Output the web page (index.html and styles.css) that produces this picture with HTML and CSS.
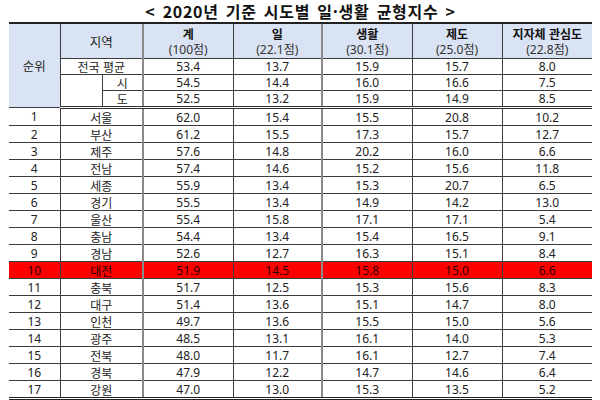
FILE: index.html
```html
<!DOCTYPE html>
<html lang="ko">
<head>
<meta charset="utf-8">
<title>2020년 기준 시도별 일·생활 균형지수</title>
<link rel="stylesheet" href="styles.css">
</head>
<body>
<div class="page">
  <h1 class="title">&lt; 2020년 기준 시도별 일·생활 균형지수 &gt;</h1>
  <table class="tbl">
    <colgroup>
      <col class="c-rank"><col class="c-ra"><col class="c-rb">
      <col class="c-v"><col class="c-v2"><col class="c-v"><col class="c-v"><col class="c-v">
    </colgroup>
    <thead>
      <tr class="hdr">
        <th rowspan="4" class="head rank-h">순위</th>
        <th colspan="2" class="head region-h">지역</th>
        <th class="head gl"><b>계</b><span>(100점)</span></th>
        <th class="head"><b>일</b><span>(22.1점)</span></th>
        <th class="head gl"><b>생활</b><span>(30.1점)</span></th>
        <th class="head"><b>제도</b><span>(25.0점)</span></th>
        <th class="head"><b>지자체 관심도</b><span>(22.8점)</span></th>
      </tr>
      <tr class="avg">
        <td colspan="2" class="region">전국 평균</td>
        <td class="gl">53.4</td><td>13.7</td><td class="gl">15.9</td><td>15.7</td><td>8.0</td>
      </tr>
      <tr class="avg">
        <td rowspan="2" class="blank"></td>
        <td class="sub">시</td>
        <td class="gl">54.5</td><td>14.4</td><td class="gl">16.0</td><td>16.6</td><td>7.5</td>
      </tr>
      <tr class="avg last">
        <td class="sub">도</td>
        <td class="gl">52.5</td><td>13.2</td><td class="gl">15.9</td><td>14.9</td><td>8.5</td>
      </tr>
    </thead>
    <tbody>
      <tr><td>1</td><td colspan="2">서울</td><td class="gl">62.0</td><td>15.4</td><td class="gl">15.5</td><td>20.8</td><td>10.2</td></tr>
      <tr><td>2</td><td colspan="2">부산</td><td class="gl">61.2</td><td>15.5</td><td class="gl">17.3</td><td>15.7</td><td>12.7</td></tr>
      <tr><td>3</td><td colspan="2">제주</td><td class="gl">57.6</td><td>14.8</td><td class="gl">20.2</td><td>16.0</td><td>6.6</td></tr>
      <tr><td>4</td><td colspan="2">전남</td><td class="gl">57.4</td><td>14.6</td><td class="gl">15.2</td><td>15.6</td><td>11.8</td></tr>
      <tr><td>5</td><td colspan="2">세종</td><td class="gl">55.9</td><td>13.4</td><td class="gl">15.3</td><td>20.7</td><td>6.5</td></tr>
      <tr><td>6</td><td colspan="2">경기</td><td class="gl">55.5</td><td>13.4</td><td class="gl">14.9</td><td>14.2</td><td>13.0</td></tr>
      <tr><td>7</td><td colspan="2">울산</td><td class="gl">55.4</td><td>15.8</td><td class="gl">17.1</td><td>17.1</td><td>5.4</td></tr>
      <tr><td>8</td><td colspan="2">충남</td><td class="gl">54.4</td><td>13.4</td><td class="gl">15.4</td><td>16.5</td><td>9.1</td></tr>
      <tr><td>9</td><td colspan="2">경남</td><td class="gl">52.6</td><td>12.7</td><td class="gl">16.3</td><td>15.1</td><td>8.4</td></tr>
      <tr class="hl"><td>10</td><td colspan="2">대전</td><td class="gl">51.9</td><td>14.5</td><td class="gl">15.8</td><td>15.0</td><td>6.6</td></tr>
      <tr><td>11</td><td colspan="2">충북</td><td class="gl">51.7</td><td>12.5</td><td class="gl">15.3</td><td>15.6</td><td>8.3</td></tr>
      <tr><td>12</td><td colspan="2">대구</td><td class="gl">51.4</td><td>13.6</td><td class="gl">15.1</td><td>14.7</td><td>8.0</td></tr>
      <tr><td>13</td><td colspan="2">인천</td><td class="gl">49.7</td><td>13.6</td><td class="gl">15.5</td><td>15.0</td><td>5.6</td></tr>
      <tr><td>14</td><td colspan="2">광주</td><td class="gl">48.5</td><td>13.1</td><td class="gl">16.1</td><td>14.0</td><td>5.3</td></tr>
      <tr><td>15</td><td colspan="2">전북</td><td class="gl">48.0</td><td>11.7</td><td class="gl">16.1</td><td>12.7</td><td>7.4</td></tr>
      <tr><td>16</td><td colspan="2">경북</td><td class="gl">47.9</td><td>12.2</td><td class="gl">14.7</td><td>14.6</td><td>6.4</td></tr>
      <tr class="end"><td>17</td><td colspan="2">강원</td><td class="gl">47.0</td><td>13.0</td><td class="gl">15.3</td><td>13.5</td><td>5.2</td></tr>
    </tbody>
  </table>
</div>
</body>
</html>
```
FILE: styles.css
```css
html, body {
  margin: 0;
  padding: 0;
  background: #ffffff;
}
body {
  font-family: "Noto Sans", "Noto Sans CJK KR", sans-serif;
  color: #222222;
  width: 600px;
  height: 400px;
  overflow: hidden;
}
.page {
  padding: 0 8px 0 9px;
}
.title {
  margin: 0;
  height: 22px;
  font-family: "Noto Sans CJK KR", sans-serif;
  font-size: 16px;
  font-weight: 700;
  line-height: 22px;
  text-align: center;
  color: #111111;
  letter-spacing: 0.7px;
  word-spacing: 2px;
}
.tbl {
  width: 583px;
  border-collapse: collapse;
  table-layout: fixed;
  font-size: 12px;
}
.c-rank { width: 51px; }
.c-ra { width: 42px; }
.c-rb { width: 41px; }
.c-v { width: 90px; }
.c-v2 { width: 89px; }

.tbl th, .tbl td {
  padding: 0;
  text-align: center;
  vertical-align: middle;
  border: 1px solid #3c3c3c;
  line-height: 15px;
  white-space: nowrap;
  overflow: hidden;
}
.tbl tr > :first-child { border-left: none; }
.tbl tr > :last-child { border-right: none; }
.tbl .hdr th { border-top: 2px solid #222222; }
.tbl .rank-h { border-left: none; }

.head {
  background: #dae3f3;
  font-weight: 400;
  height: 34px;
  font-size: 12px;
}
.head b, .head span {
  display: block;
  line-height: 17px;
}
.head b {
  font-family: "Noto Sans CJK KR", sans-serif;
  font-weight: 700;
  color: #111111;
  font-size: 12px;
}
.head span {
  color: #333333;
  margin-top: -1px;
}
.rank-h, .region-h {
  font-family: "Noto Sans CJK KR", sans-serif;
  font-size: 12.5px;
}
.avg td {
  height: 15px;
}
.avg td.region, .sub {
  font-family: "Noto Sans CJK KR", sans-serif;
}
.avg.last td, .avg td.blank {
  border-bottom: 3px double #333333;
}
.tbl tbody td {
  height: 16px;
}
.tbl tbody td:nth-child(2) {
  font-family: "Noto Sans CJK KR", sans-serif;
}
.tbl .gl {
  border-left: 2px solid #8a8a8a;
}
.tbl tr.hl td {
  background: #ff0000;
  color: #2a0000;
}
.tbl tr.end td {
  border-bottom: 3px double #222222;
}
```
